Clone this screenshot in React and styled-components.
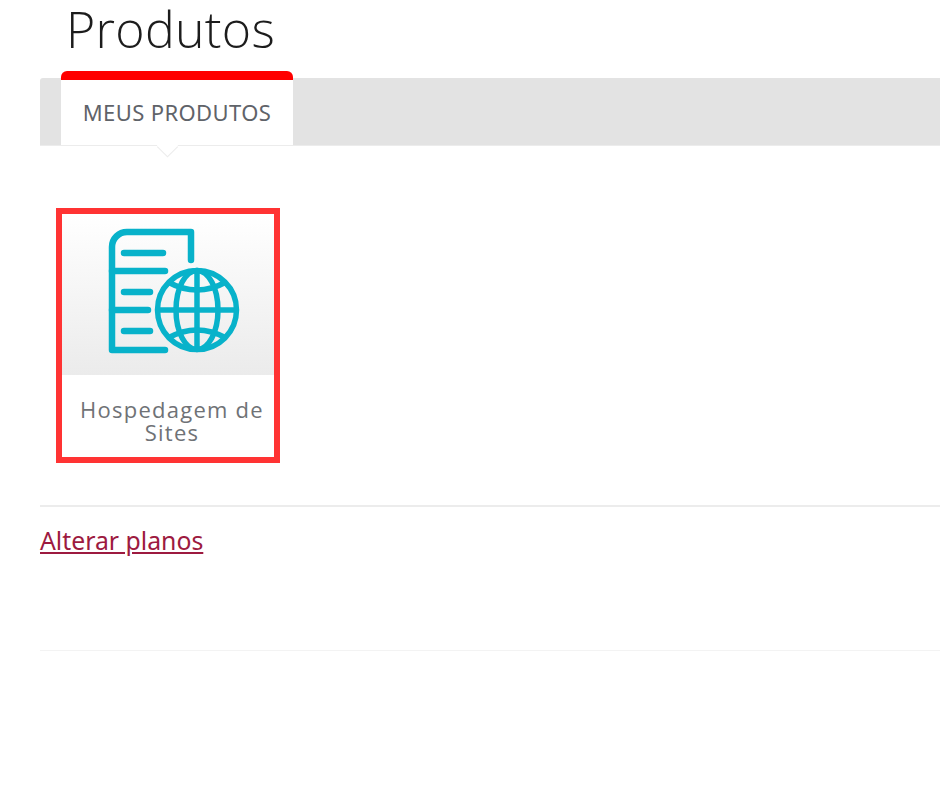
import React from 'react'
import styled, { createGlobalStyle } from 'styled-components'

const Global = createGlobalStyle`
  html, body {
    margin: 0;
    padding: 0;
    background: #fff;
    overflow: hidden;
  }
`

const Page = styled.div`
  height: 788px;
  padding-left: 40px;
  font-family: 'Noto Sans', 'Open Sans', sans-serif;
  overflow: hidden;
`

const Title = styled.h1`
  margin: 0 0 0 26px;
  height: 78px;
  font-family: 'Open Sans', 'Noto Sans', sans-serif;
  font-size: 50px;
  font-weight: 300;
  line-height: 58px;
  letter-spacing: 0.3px;
  color: #1c1c1c;
`

const TabBar = styled.div`
  display: flex;
  height: 68px;
  padding-left: 21px;
  background: #e3e3e3;
  border-radius: 3px 0 0 0;
  border-bottom: 1px solid #ececec;
  box-sizing: border-box;
`

const Tab = styled.div`
  position: relative;
  width: 232px;
  height: 74px;
  margin-top: -7px;
  box-sizing: border-box;
  border-top: 9px solid #f00;
  border-radius: 6px 6px 0 0;
  background: #fff;
  display: flex;
  justify-content: center;
  padding-top: 18px;
  font-size: 22px;
  line-height: 28px;
  letter-spacing: 0.4px;
  color: #5f6369;

  &::after {
    content: '';
    position: absolute;
    left: 99px;
    bottom: -8px;
    width: 15px;
    height: 15px;
    background: #fff;
    transform: rotate(45deg);
    box-shadow: 1px 1px 0 #ececec;
  }
`

const Products = styled.div`
  padding: 62px 0 42px 16px;
  border-bottom: 2px solid #ececec;
`

const Card = styled.div`
  width: 224px;
  height: 255px;
  box-sizing: border-box;
  border: 6px solid #ff3333;
  background: #fff;
  display: flex;
  flex-direction: column;
`

const Thumb = styled.div`
  height: 161px;
  flex: none;
  padding: 12px 0 0 44px;
  box-sizing: border-box;
  background: linear-gradient(#ffffff, #ebebeb);
`

const CardLabel = styled.div`
  margin-top: 23px;
  padding-left: 8px;
  text-align: center;
  font-family: 'Open Sans', 'Noto Sans', sans-serif;
  font-size: 22px;
  line-height: 23px;
  letter-spacing: 1.25px;
  white-space: pre-line;
  color: #6f7276;
`

const LinkRow = styled.div`
  height: 144px;
  padding-top: 17px;
  box-sizing: border-box;
  border-bottom: 1px solid #f3f3f3;
`

const PlanLink = styled.a`
  font-size: 24.8px;
  line-height: 32px;
  color: #9d1a40;
  text-decoration: underline;
`

const HostingIcon = () => (
  <svg width="140" height="130" viewBox="0 0 140 130" fill="none" stroke="#08b2ca" strokeWidth="6.5" strokeLinecap="round" strokeLinejoin="round">
    <path d="M85 34V6H21A15 15 0 0 0 6 21V124H59" />
    <path d="M6 45H59M6 84H42" />
    <path d="M18 27H57M18 66H44M18 105H44" />
    <g strokeWidth="5.5" strokeLinecap="butt">
      <circle cx="91" cy="84" r="39.5" />
      <ellipse cx="91" cy="84" rx="21" ry="39.5" />
      <path d="M91 44.5V123.5M51.5 84H130.5" />
      <path d="M62 56Q91 72 120 56M62 112Q91 96 120 112" />
    </g>
  </svg>
)

export default function App() {
  return (
    <Page>
      <Global />
      <Title>Produtos</Title>
      <TabBar>
        <Tab>MEUS PRODUTOS</Tab>
      </TabBar>
      <Products>
        <Card>
          <Thumb>
            <HostingIcon />
          </Thumb>
          <CardLabel>{'Hospedagem de\nSites'}</CardLabel>
        </Card>
      </Products>
      <LinkRow>
        <PlanLink href="#">Alterar planos</PlanLink>
      </LinkRow>
    </Page>
  )
}
